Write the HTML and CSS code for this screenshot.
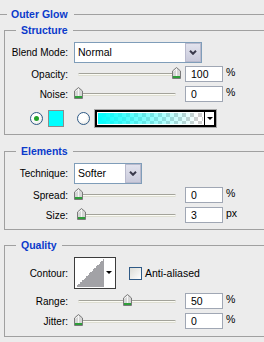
FILE: index.html
```html
<!DOCTYPE html>
<html lang="en">
<head>
  <meta charset="UTF-8" />
  <title>Outer Glow</title>
  <link rel="stylesheet" href="styles.css">
</head>
<body>
  <div class="panel">
    <div class="title">
      <span class="rule short"></span>
      <span class="title-text">Outer Glow</span>
      <span class="rule"></span>
    </div>

    <!-- Structure -->
    <fieldset class="group">
      <legend>Structure</legend>
      <div class="row row-select">
        <span class="lbl">Blend Mode:</span>
        <div class="select select-wide">
          <span class="select-value">Normal</span>
          <span class="select-btn"><svg width="8" height="5" viewBox="0 0 8 5"><path d="M1 0.8 L4 3.8 L7 0.8" fill="none" stroke="#3a3a4c" stroke-width="2"/></svg></span>
        </div>
      </div>
      <div class="row row-slider">
        <span class="lbl">Opacity:</span>
        <div class="slider">
          <div class="track"></div>
          <span class="thumb" style="left: 98px"><svg width="9" height="12" viewBox="0 0 9 12"><path d="M0.5 4 L4.5 0.5 L8.5 4 V11.5 H0.5 Z" fill="#d6d6d6" stroke="#7a7a7a"/><path d="M1.5 4.4 L4.5 1.8 V9" fill="none" stroke="#f6f6f6"/><rect x="1" y="9" width="7" height="2" fill="#2e9e3a"/></svg></span>
        </div>
        <div class="num">100</div>
        <span class="unit">%</span>
      </div>
      <div class="row row-slider">
        <span class="lbl">Noise:</span>
        <div class="slider">
          <div class="track"></div>
          <span class="thumb" style="left: 0px"><svg width="9" height="12" viewBox="0 0 9 12"><path d="M0.5 4 L4.5 0.5 L8.5 4 V11.5 H0.5 Z" fill="#d6d6d6" stroke="#7a7a7a"/><path d="M1.5 4.4 L4.5 1.8 V9" fill="none" stroke="#f6f6f6"/><rect x="1" y="9" width="7" height="2" fill="#2e9e3a"/></svg></span>
        </div>
        <div class="num">0</div>
        <span class="unit">%</span>
      </div>
      <div class="row row-color">
        <span class="radio checked"></span>
        <span class="swatch"></span>
        <span class="radio radio-2"></span>
        <div class="grad-box">
          <div class="grad-frame">
            <span class="grad-fill"></span>
            <span class="grad-arrow"><span class="tri"></span></span>
          </div>
        </div>
      </div>
    </fieldset>

    <!-- Elements -->
    <fieldset class="group">
      <legend>Elements</legend>
      <div class="row row-select">
        <span class="lbl">Technique:</span>
        <div class="select select-short">
          <span class="select-value">Softer</span>
          <span class="select-btn"><svg width="8" height="5" viewBox="0 0 8 5"><path d="M1 0.8 L4 3.8 L7 0.8" fill="none" stroke="#3a3a4c" stroke-width="2"/></svg></span>
        </div>
      </div>
      <div class="row row-slider">
        <span class="lbl">Spread:</span>
        <div class="slider">
          <div class="track"></div>
          <span class="thumb" style="left: 0px"><svg width="9" height="12" viewBox="0 0 9 12"><path d="M0.5 4 L4.5 0.5 L8.5 4 V11.5 H0.5 Z" fill="#d6d6d6" stroke="#7a7a7a"/><path d="M1.5 4.4 L4.5 1.8 V9" fill="none" stroke="#f6f6f6"/><rect x="1" y="9" width="7" height="2" fill="#2e9e3a"/></svg></span>
        </div>
        <div class="num">0</div>
        <span class="unit">%</span>
      </div>
      <div class="row row-slider">
        <span class="lbl">Size:</span>
        <div class="slider">
          <div class="track"></div>
          <span class="thumb" style="left: 3px"><svg width="9" height="12" viewBox="0 0 9 12"><path d="M0.5 4 L4.5 0.5 L8.5 4 V11.5 H0.5 Z" fill="#d6d6d6" stroke="#7a7a7a"/><path d="M1.5 4.4 L4.5 1.8 V9" fill="none" stroke="#f6f6f6"/><rect x="1" y="9" width="7" height="2" fill="#2e9e3a"/></svg></span>
        </div>
        <div class="num">3</div>
        <span class="unit">px</span>
      </div>
    </fieldset>

    <!-- Quality -->
    <fieldset class="group quality">
      <legend>Quality</legend>
      <div class="row row-contour">
        <span class="lbl">Contour:</span>
        <div class="contour">
          <span class="contour-preview"></span>
          <span class="contour-arrow"><span class="tri"></span></span>
        </div>
        <span class="check"></span>
        <span class="check-lbl">Anti-aliased</span>
      </div>
      <div class="row row-slider">
        <span class="lbl">Range:</span>
        <div class="slider">
          <div class="track"></div>
          <span class="thumb" style="left: 49px"><svg width="9" height="12" viewBox="0 0 9 12"><path d="M0.5 4 L4.5 0.5 L8.5 4 V11.5 H0.5 Z" fill="#d6d6d6" stroke="#7a7a7a"/><path d="M1.5 4.4 L4.5 1.8 V9" fill="none" stroke="#f6f6f6"/><rect x="1" y="9" width="7" height="2" fill="#2e9e3a"/></svg></span>
        </div>
        <div class="num">50</div>
        <span class="unit">%</span>
      </div>
      <div class="row row-slider">
        <span class="lbl">Jitter:</span>
        <div class="slider">
          <div class="track"></div>
          <span class="thumb" style="left: 0px"><svg width="9" height="12" viewBox="0 0 9 12"><path d="M0.5 4 L4.5 0.5 L8.5 4 V11.5 H0.5 Z" fill="#d6d6d6" stroke="#7a7a7a"/><path d="M1.5 4.4 L4.5 1.8 V9" fill="none" stroke="#f6f6f6"/><rect x="1" y="9" width="7" height="2" fill="#2e9e3a"/></svg></span>
        </div>
        <div class="num">0</div>
        <span class="unit">%</span>
      </div>
    </fieldset>
  </div>
</body>
</html>
```

FILE: styles.css
```css
/* Reset and base */
* {
  box-sizing: border-box;
}
body {
  margin: 0;
  background: #ececec;
  color: #000;
  font-family: "Liberation Sans", Arial, sans-serif;
  font-size: 10px;
  overflow: hidden;
}

.panel {
  padding-top: 8px;
}

/* Title rule */
.title {
  display: flex;
  align-items: center;
  height: 13px;
}
.title .rule {
  flex: 1;
  height: 1px;
  background: #a0a0a0;
}
.title .rule.short {
  flex: 0 0 7px;
}
.title-text {
  padding: 0 6px 0 4px;
  font-weight: bold;
  font-size: 10.5px;
  line-height: 13px;
  color: #0a3acb;
}

/* Group boxes (right edge runs off the panel) */
.group {
  margin: 3px 0 0 4px;
  padding: 5px 0 6px;
  border: 1px solid #a0a0a0;
  border-right: 0;
  min-width: 0;
}
.group + .group {
  margin-top: 10px;
}
.group.quality {
  margin-top: 9px;
  padding-bottom: 7px;
}
legend {
  margin-left: 11px;
  padding: 0 5px;
  font-weight: bold;
  font-size: 10.5px;
  line-height: 13px;
  color: #0a3acb;
}

/* Rows */
.row {
  display: flex;
  align-items: center;
}
.row-select {
  height: 21px;
}
.row-slider {
  height: 16px;
  margin-top: 4px;
}
.row-select + .row-slider {
  margin-top: 3px;
}
.row-color {
  height: 19px;
  margin-top: 7px;
}
.row-contour {
  height: 32px;
}
.lbl {
  width: 63px;
  margin-right: 6px;
  text-align: right;
  white-space: nowrap;
}

/* Select */
.select {
  display: flex;
  align-items: stretch;
  height: 21px;
  border: 1px solid #7f9db9;
  background: #fff;
}
.select-wide {
  width: 128px;
}
.select-short {
  width: 68px;
}
.select-value {
  flex: 1;
  padding-left: 3px;
  line-height: 19px;
  font-size: 10.5px;
}
.select-btn {
  width: 16px;
  display: flex;
  align-items: center;
  justify-content: center;
  background: linear-gradient(#e2e3ee, #c9cadb);
  border: 1px solid #b9bacd;
}

/* Slider */
.slider {
  position: relative;
  width: 111px;
  align-self: stretch;
}
.track {
  margin: 7px 0 0 4px;
  width: 98px;
  height: 3px;
  border-top: 1px solid #a3a39b;
  border-bottom: 1px solid #deded2;
  background: #fbfbf4;
  border-radius: 2px;
}
.thumb {
  position: absolute;
  top: 1px;
  width: 9px;
  height: 12px;
  display: block;
}
.thumb svg {
  display: block;
}
.num {
  width: 38px;
  height: 16px;
  padding-left: 5px;
  border: 1px solid #a0a7b4;
  background: #fff;
  line-height: 14px;
  font-size: 10.5px;
}
.unit {
  align-self: flex-start;
  margin: 1px 0 0 3px;
  line-height: 11px;
  font-size: 10.5px;
}

/* Color row */
.radio {
  width: 13px;
  height: 13px;
  margin-left: 25px;
  border: 1px solid #2f5a86;
  border-radius: 50%;
  background: radial-gradient(circle at 40% 35%, #fff 40%, #dcdcd6);
  display: flex;
  align-items: center;
  justify-content: center;
}
.radio.checked::after {
  content: "";
  width: 5px;
  height: 5px;
  border-radius: 50%;
  background: #22a22a;
}
.radio-2 {
  margin-left: 13px;
}
.swatch {
  width: 16px;
  height: 17px;
  margin-left: 5px;
  border: 1px solid #8c8c8c;
  background: #00ffff;
}
.grad-box {
  width: 123px;
  height: 19px;
  margin-left: 4px;
  border: 1px solid #a8a8a8;
}
.grad-frame {
  display: flex;
  height: 100%;
  border: 2px solid #000;
  background: #fff;
}
.grad-fill {
  flex: 1;
  border: 1px solid #fff;
  background:
    linear-gradient(to right, #00ffff, rgba(0, 255, 255, 0.5) 45%, rgba(0, 255, 255, 0) 95%),
    repeating-conic-gradient(#cfcfcf 0 25%, #fff 0 50%) 0 0 / 8px 8px;
}
.grad-arrow {
  width: 10px;
  border-left: 1px solid #000;
  display: flex;
  align-items: center;
  justify-content: center;
}
.tri {
  width: 0;
  height: 0;
  border-left: 3px solid transparent;
  border-right: 3px solid transparent;
  border-top: 3px solid #000;
}

/* Contour */
.contour {
  display: flex;
  width: 42px;
  height: 32px;
  padding: 1px;
  border: 1px solid #3c3c3c;
  background: #fff;
}
.contour-preview {
  width: 28px;
  height: 28px;
  background: linear-gradient(to top left, #a2a2a6 50%, #fff 50%);
}
.contour-arrow {
  flex: 1;
  display: flex;
  align-items: center;
  justify-content: center;
  padding-bottom: 2px;
}
.check {
  width: 13px;
  height: 13px;
  margin-left: 13px;
  border: 1px solid #2f5a86;
  background: linear-gradient(135deg, #dcdcd6, #fff);
}
.check-lbl {
  margin-left: 3px;
  font-size: 10.5px;
}
```
